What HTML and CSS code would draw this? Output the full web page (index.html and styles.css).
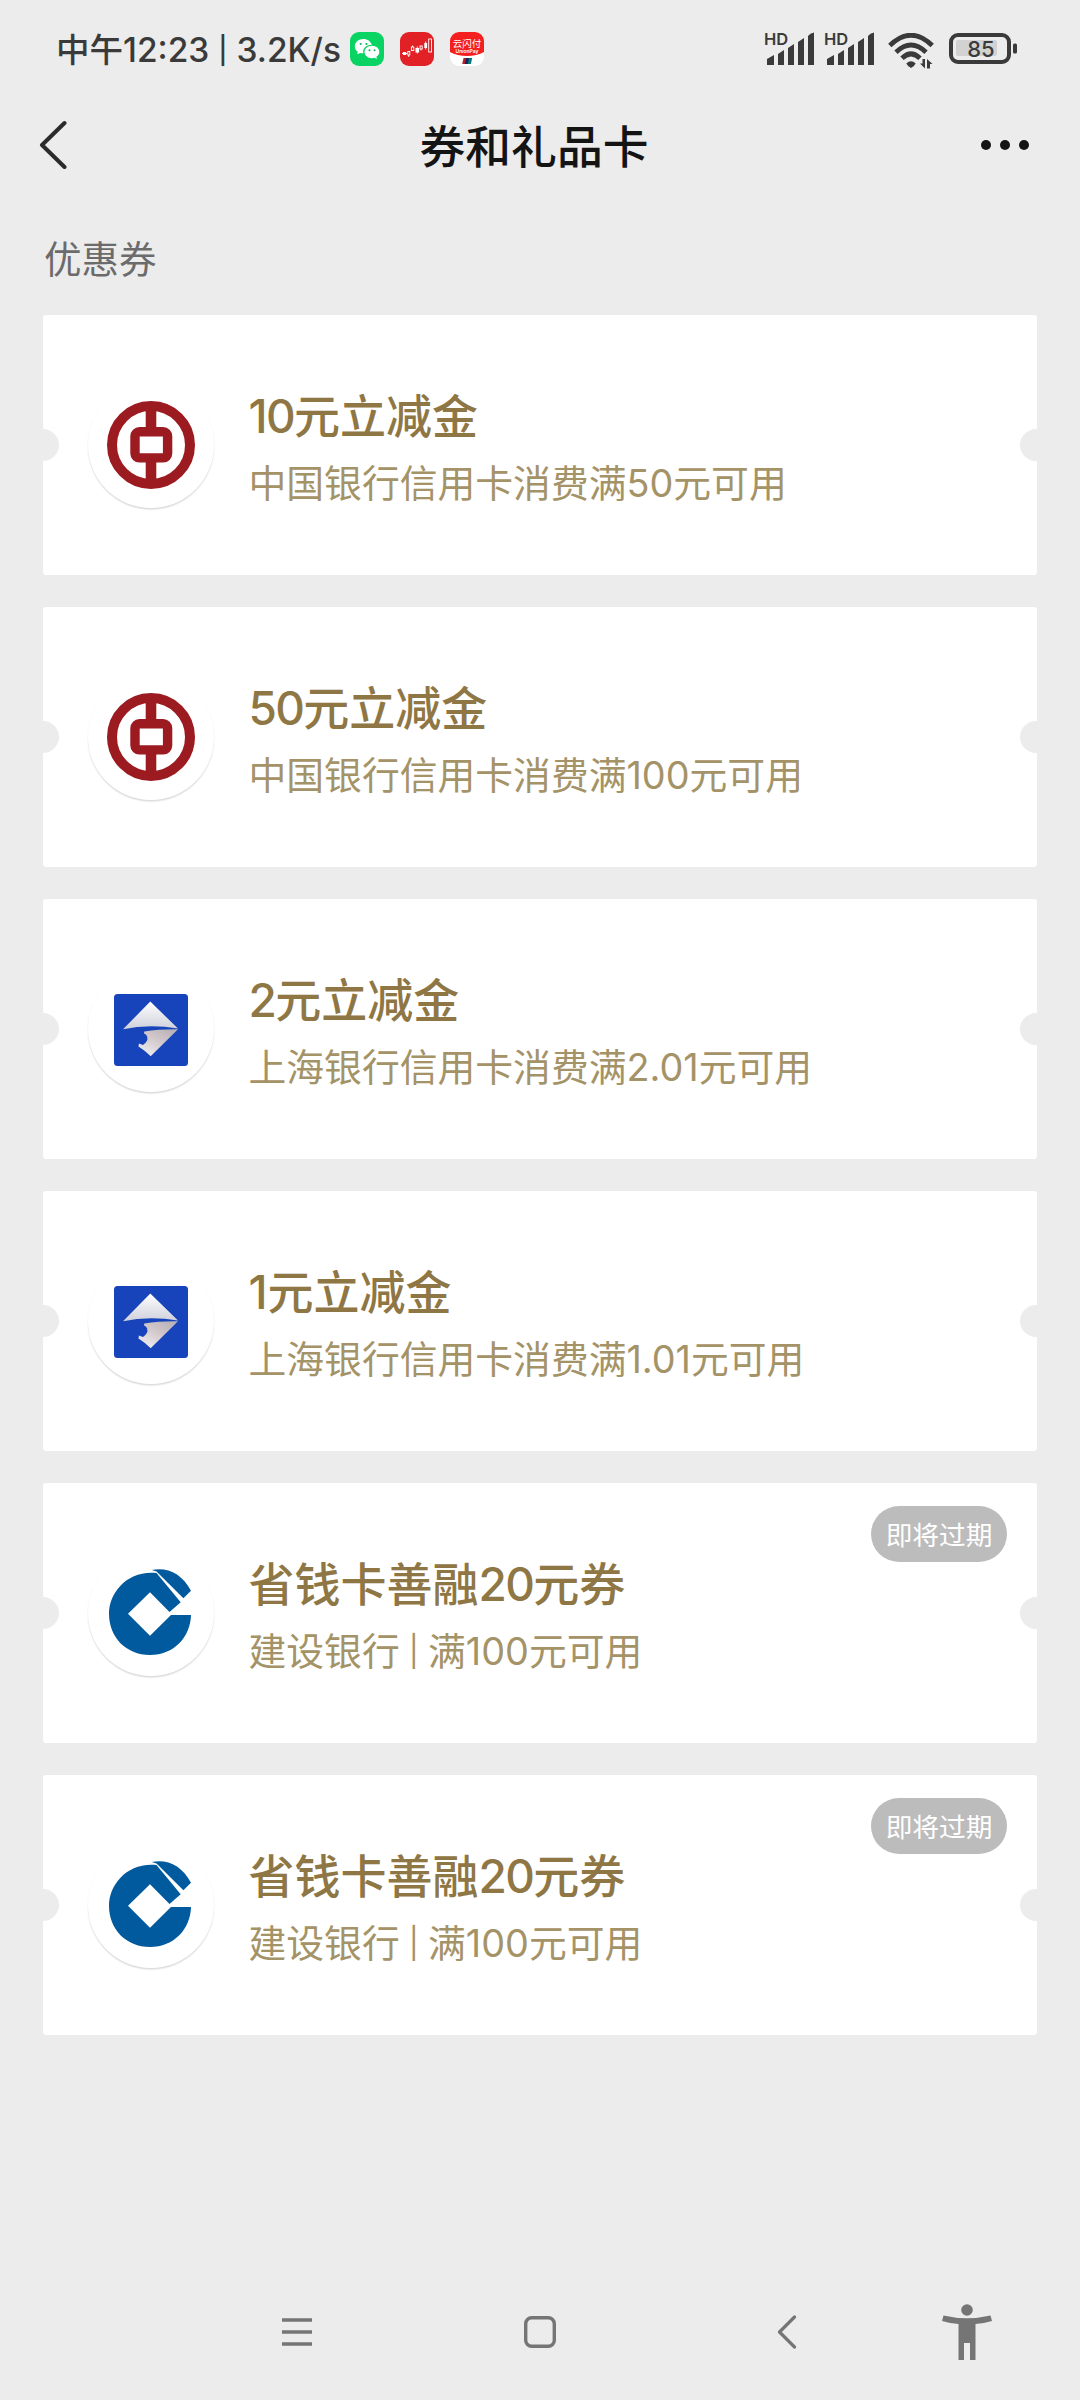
FILE: index.html
```html
<!DOCTYPE html>
<html lang="zh-CN">
<head>
<meta charset="utf-8">
<title>券和礼品卡</title>
<link rel="stylesheet" href="styles.css">
</head>
<body>
<svg class="defs" aria-hidden="true">
  <defs>
    <linearGradient id="silver" x1="0" y1="0" x2="0" y2="1">
      <stop offset="0" stop-color="#fff"/><stop offset="1" stop-color="#cfd0dc"/>
    </linearGradient>
    <linearGradient id="silver-low" x1="1" y1="0" x2="0.2" y2="1">
      <stop offset="0" stop-color="#b5adb6"/><stop offset="0.5" stop-color="#d2c8ca"/><stop offset="1" stop-color="#eeeef2"/>
    </linearGradient>
    <symbol id="boc" viewBox="0 0 88 88">
      <g fill="none" stroke="#9b1b21">
        <circle cx="44" cy="44" r="39" stroke-width="10"/>
        <path d="M44 8v20M44 60v20" stroke-width="10.6"/>
        <rect x="28" y="30.7" width="32.6" height="26.2" rx="4.5" stroke-width="9.4"/>
      </g>
    </symbol>
    <symbol id="bos" viewBox="0 0 88 88">
      <rect x="7" y="9" width="74" height="72" rx="3.5" fill="#1744bb"/>
      <path d="M43.300 16.500L71 43.600Q42 38.800 16 44.300Z" fill="url(#silver)"/>
      <path d="M71 44.200L43.700 71.300Q38 65.500 31.500 61.500L31.900 58.500L36 60Q41.500 55.500 40.300 53Q40.500 50 37 48.500L37.300 46.500Q52 44 71 44.200Z" fill="url(#silver-low)"/>
    </symbol>
    <symbol id="ccb" viewBox="0 0 88 88">
      <path d="M49.500 4C21 1 2 23 2 45C2 68 19 86 43 86C67 86 83.500 68 84 46H64L43 66.700L21 44.800L43 23.300L62.500 43L73.700 33.300Z" fill="#005a9d"/>
      <path d="M44.800 1C61-2 75 5 84 21.700L76.400 29.300L49.500 2.500Z" fill="#005a9d"/>
    </symbol>
    <symbol id="signal" viewBox="0 0 50 34">
      <path d="M2 32.500v-5.500l7-4v9.500q0 .5-.5.500h-6q-.5 0-.5-.5zM13 32.500v-10.500l6-4v14.500q0 .5-.5.500h-5q-.5 0-.5-.5zM23 32.500v-16.500l6-4v20.500q0 .5-.5.500h-5q-.5 0-.5-.5zM33 32.500v-22.500l6-4v26.500q0 .5-.5.500h-5q-.5 0-.5-.5zM43 32.500v-28.500q2-3 6-3.500v32q0 .5-.5.500h-5q-.5 0-.5-.5z" fill="#3a3a3a"/>
    </symbol>
  </defs>
</svg>
<div class="screen">
  <header class="status">
    <span class="status-text">中午12:23 <span class="sep">|</span> 3.2K/s</span>
    <div class="apps">
      <svg class="app" viewBox="0 0 34 34">
        <rect width="34" height="34" rx="9" fill="#08d363"/>
        <path d="M13.500 7C8.500 7 4.800 10.200 4.800 14.300c0 2.300 1.200 4.200 3 5.500l-.6 2.500 3-1.400c1 .3 2 .4 3.100.4-.9-5 3-8.700 8.500-8.500C20.700 9.300 17.500 7 13.500 7z" fill="#fff"/>
        <path d="M22 13.800c-4.200 0-7.500 2.800-7.500 6.200s3.300 6.200 7.500 6.200c.9 0 1.700-.1 2.500-.4l2.400 1.200-.5-2.200c1.800-1.200 2.900-2.900 2.900-4.800 0-3.400-3.100-6.200-7.300-6.200z" fill="#fff"/>
        <g fill="#08b957"><circle cx="10.700" cy="12" r="1.100"/><circle cx="16.500" cy="12" r="1.100"/><circle cx="19.500" cy="18.300" r="1"/><circle cx="24.600" cy="18.300" r="1"/></g>
      </svg>
      <svg class="app" viewBox="0 0 34 34">
        <rect width="34" height="34" rx="9" fill="#e12125"/>
        <g fill="#fff"><rect x="3" y="20" width="3.200" height="3"/><rect x="15.500" y="16" width="3.600" height="4.500"/><rect x="24.300" y="11" width="2.800" height="5"/></g>
        <g fill="none" stroke="#fff" stroke-width=".9"><path d="M2 21.500h5.500M12.500 13.500v1.500M21 17v1.500M25.700 9.500v8M17.300 14.500v7M8.700 23v2"/><rect x="7.800" y="19.500" width="2" height="3.500"/><rect x="11.400" y="15" width="2.400" height="3.500"/><rect x="20" y="14" width="2.200" height="3"/><rect x="28.700" y="7" width="2.800" height="13"/></g>
      </svg>
      <svg class="app" viewBox="0 0 34 34">
        <rect width="34" height="34" rx="9" fill="#fff"/>
        <path d="M0 20V9a9 9 0 0 1 9-9h16a9 9 0 0 1 9 9v11q-7 4-17 4T0 20z" fill="#f4201f"/>
        <text x="17" y="14.600" class="pay-cn">云闪付</text>
        <text x="17" y="20.800" class="pay-en">UnionPay</text>
        <path d="M13.500 26h3.500l-1.300 6h-3.500z" fill="#b3202c"/><path d="M16.200 26h3.500l-1.300 6h-3.500z" fill="#17245f"/><path d="M19 26h3.200l-1.300 6h-3.200z" fill="#067a78"/>
      </svg>
    </div>
    <div class="indicators">
      <div class="cell"><svg class="bars"><use href="#signal"/></svg><span class="hd">HD</span></div>
      <div class="cell"><svg class="bars"><use href="#signal"/></svg><span class="hd">HD</span></div>
      <svg class="wifi" viewBox="0 0 46 36">
        <g fill="none" stroke="#3a3a3a" stroke-width="4.800"><path d="M1.800 12.500Q23-8 44.200 12.500"/><path d="M8 19.200Q23 4.800 38 19.200"/><path d="M14 25.300Q23 16.500 32 25.300"/></g>
        <path d="M18.300 30.500q4.700-4.500 9.400 0q-1.500 3-4.700 4.500q-3.200-1.500-4.700-4.500z" fill="#3a3a3a"/>
        <path d="M37 26v9.500l-5-5h2.500V26zM39 35.500V26l5.500 5H42v4.500z" fill="#3a3a3a"/>
      </svg>
      <svg class="battery" viewBox="0 0 69 32">
        <rect x="2" y="2" width="58" height="27" rx="7" fill="none" stroke="#3a3a3a" stroke-width="4"/>
        <rect x="7" y="7" width="41" height="16" rx="2" fill="#d2d2d2"/>
        <rect x="64" y="10.500" width="4" height="10" rx="1.500" fill="#3a3a3a"/>
        <text x="32" y="23.700" class="charge">85</text>
      </svg>
    </div>
  </header>

  <nav class="titlebar">
    <svg class="back" viewBox="0 0 28 50"><path d="M25.500 3L3 25L25.500 47" fill="none" stroke="#2b2b2b" stroke-width="4" stroke-linecap="round" stroke-linejoin="round"/></svg>
    <h1 class="title">券和礼品卡</h1>
    <svg class="more" viewBox="0 0 50 12"><circle cx="6" cy="6" r="5"/><circle cx="25" cy="6" r="5"/><circle cx="44" cy="6" r="5"/></svg>
  </nav>

  <h2 class="section">优惠券</h2>

  <main class="coupons">
    <article class="coupon">
      <div class="logo"><svg class="mark"><use href="#boc"/></svg></div>
      <div class="info"><h3 class="name"><span class="num">10</span>元立减金</h3><p class="desc">中国银行信用卡消费满50元可用</p></div>
    </article>
    <article class="coupon">
      <div class="logo"><svg class="mark"><use href="#boc"/></svg></div>
      <div class="info"><h3 class="name"><span class="num">50</span>元立减金</h3><p class="desc">中国银行信用卡消费满100元可用</p></div>
    </article>
    <article class="coupon">
      <div class="logo"><svg class="mark"><use href="#bos"/></svg></div>
      <div class="info"><h3 class="name"><span class="num">2</span>元立减金</h3><p class="desc">上海银行信用卡消费满2.01元可用</p></div>
    </article>
    <article class="coupon">
      <div class="logo"><svg class="mark"><use href="#bos"/></svg></div>
      <div class="info"><h3 class="name">1元立减金</h3><p class="desc">上海银行信用卡消费满1.01元可用</p></div>
    </article>
    <article class="coupon">
      <div class="logo"><svg class="mark"><use href="#ccb"/></svg></div>
      <div class="info"><h3 class="name">省钱卡善融<span class="num">20</span>元券</h3><p class="desc">建设银行 <span class="sep">|</span> 满100元可用</p></div>
      <span class="badge">即将过期</span>
    </article>
    <article class="coupon">
      <div class="logo"><svg class="mark"><use href="#ccb"/></svg></div>
      <div class="info"><h3 class="name">省钱卡善融<span class="num">20</span>元券</h3><p class="desc">建设银行 <span class="sep">|</span> 满100元可用</p></div>
      <span class="badge">即将过期</span>
    </article>
  </main>

  <footer class="sysnav">
    <svg class="nav-menu" viewBox="0 0 30 28"><path d="M0 2h30M0 14h30M0 26h30" stroke="#757575" stroke-width="3.300"/></svg>
    <svg class="nav-home" viewBox="0 0 32 32"><rect x="1.700" y="1.700" width="28.600" height="28.600" rx="6" fill="none" stroke="#757575" stroke-width="3.400"/></svg>
    <svg class="nav-back" viewBox="0 0 20 34"><path d="M17.500 2L2.500 17L17.500 32" fill="none" stroke="#757575" stroke-width="3.200" stroke-linecap="round" stroke-linejoin="round"/></svg>
    <svg class="nav-access" viewBox="0 0 50 56"><circle cx="25" cy="6" r="5.800"/><path d="M1.500 11.500Q25 17 48.500 11.500L50 17Q42 19.500 33.500 20V56H28V39H22V56H16.500V20Q8 19.500 0 17Z"/></svg>
  </footer>
</div>
</body>
</html>
```
FILE: styles.css
```css
* { box-sizing: border-box; }
body {
  margin: 0;
  background: #ececec;
  font-family: Inter, "Noto Sans CJK SC", sans-serif;
}
h1, h2, h3, p { margin: 0; }
svg { display: block; }
.defs { position: absolute; width: 0; height: 0; }
.screen {
  width: 1080px;
  height: 2400px;
  display: flex;
  flex-direction: column;
  overflow: hidden;
}

/* status bar */
.status {
  height: 98px;
  padding: 0 62px 0 56px;
  display: flex;
  align-items: center;
}
.status-text {
  width: 294px;
  padding-top: 2px;
  font-size: 33.5px;
  font-weight: 500;
  line-height: 40px;
  color: #3a3a3a;
  white-space: pre;
}
.sep {
  font-size: .8em;
  line-height: 1;
  vertical-align: .07em;
}
.apps { display: flex; gap: 16px; }
.app { width: 34px; height: 34px; }
.pay-cn { font-size: 9.500px; fill: #fff; text-anchor: middle; }
.pay-en { font-size: 5px; font-weight: 600; fill: #fff; text-anchor: middle; }
.indicators {
  margin-left: auto;
  display: flex;
  align-items: center;
}
.cell { position: relative; width: 60px; height: 34px; }
.bars { width: 50px; height: 34px; margin-left: -2px; }
.hd {
  position: absolute;
  left: -3px;
  top: -1px;
  font-size: 16.500px;
  font-weight: 600;
  line-height: 16px;
  color: #3a3a3a;
}
.wifi { width: 46px; height: 36px; margin: 3px 15px 0 1px; }
.battery { width: 69px; height: 32px; }
.charge { font-size: 22px; font-weight: 500; fill: #3a3a3a; text-anchor: middle; }

/* title bar */
.titlebar {
  height: 94px;
  padding: 0 50px 0 39px;
  display: flex;
  align-items: center;
  justify-content: space-between;
}
.back { width: 28px; height: 50px; }
.title {
  font-size: 45.800px;
  font-weight: 500;
  line-height: 60px;
  color: #141414;
  padding: 6px 0 0 21px;
}
.more { width: 50px; height: 12px; fill: #141414; }
.section {
  height: 123px;
  padding: 43px 0 0 44px;
  font-size: 37.500px;
  font-weight: 400;
  line-height: 50px;
  color: #6b6b6b;
}

/* coupon list */
.coupons {
  margin: 0 43px;
  display: flex;
  flex-direction: column;
  gap: 32px;
}
.coupon {
  position: relative;
  height: 260px;
  padding: 0 45px;
  display: flex;
  align-items: center;
  gap: 34.500px;
  border-radius: 3px;
  background: #fff;
  overflow: hidden;
}
.coupon::before,
.coupon::after {
  content: "";
  position: absolute;
  top: 114px;
  width: 32px;
  height: 32px;
  border-radius: 50%;
  background: #ececec;
}
.coupon::before { left: -16px; }
.coupon::after { right: -15px; }
.logo {
  width: 126px;
  height: 126px;
  border-radius: 50%;
  display: grid;
  place-items: center;
  box-shadow: 0 1.500px 1.500px rgba(0, 0, 0, .15);
}
.mark { width: 88px; height: 88px; }
.info { padding-top: 5px; white-space: nowrap; }
.name {
  font-size: 46px;
  font-weight: 500;
  line-height: 56px;
  color: #8f7745;
}
.num { letter-spacing: -1.700px; }
.desc {
  margin-top: 14px;
  font-size: 37.800px;
  line-height: 50px;
  color: #a59368;
}
.desc .sep { margin: 0 -1.500px; }
.badge {
  position: absolute;
  top: 23px;
  right: 30px;
  width: 136px;
  height: 56px;
  border-radius: 28px;
  background: #bcbcbc;
  color: #fff;
  font-size: 26.700px;
  line-height: 59px;
  text-align: center;
}

/* system navigation */
.sysnav {
  margin-top: auto;
  height: 136px;
  padding: 0 88px 0 282px;
  display: flex;
  align-items: center;
}
.nav-menu { width: 30px; height: 28px; margin-right: 212px; }
.nav-home { width: 32px; height: 32px; margin-right: 221px; }
.nav-back { width: 20px; height: 34px; }
.nav-access { width: 50px; height: 56px; margin-left: auto; fill: #757575; }
```
